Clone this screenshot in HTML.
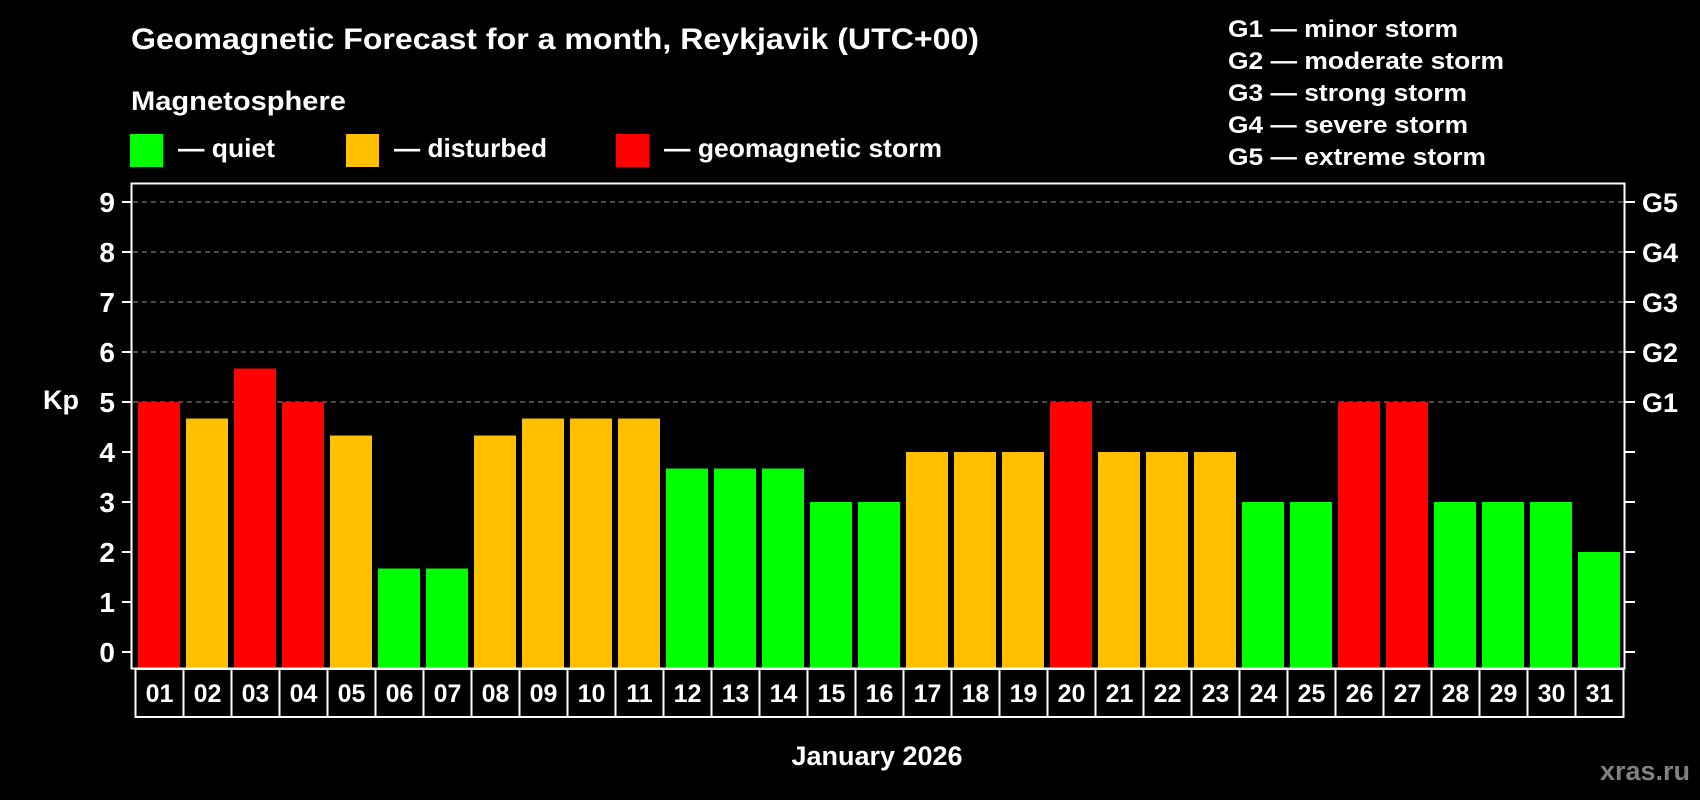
<!DOCTYPE html>
<html><head><meta charset="utf-8"><style>
html,body{margin:0;padding:0;background:#000;}
svg{display:block;font-family:"Liberation Sans",Arial,sans-serif;font-weight:bold;}
</style></head><body>
<svg width="1700" height="800" viewBox="0 0 1700 800" xmlns="http://www.w3.org/2000/svg">
<rect width="1700" height="800" fill="#000"/>
<g fill="#fff">
<text x="131" y="49" font-size="30" textLength="848" lengthAdjust="spacingAndGlyphs">Geomagnetic Forecast for a month, Reykjavik (UTC+00)</text>
<text x="131" y="110" font-size="27" textLength="215" lengthAdjust="spacingAndGlyphs">Magnetosphere</text>
<text x="178" y="157" font-size="26" textLength="97" lengthAdjust="spacingAndGlyphs">— quiet</text>
<text x="394" y="157" font-size="26" textLength="153" lengthAdjust="spacingAndGlyphs">— disturbed</text>
<text x="664" y="157" font-size="26" textLength="278" lengthAdjust="spacingAndGlyphs">— geomagnetic storm</text>
<g font-size="24">
<text x="1228" y="37" textLength="230" lengthAdjust="spacingAndGlyphs">G1 — minor storm</text>
<text x="1228" y="69" textLength="276" lengthAdjust="spacingAndGlyphs">G2 — moderate storm</text>
<text x="1228" y="101" textLength="239" lengthAdjust="spacingAndGlyphs">G3 — strong storm</text>
<text x="1228" y="133" textLength="240" lengthAdjust="spacingAndGlyphs">G4 — severe storm</text>
<text x="1228" y="165" textLength="258" lengthAdjust="spacingAndGlyphs">G5 — extreme storm</text>
</g>
</g>
<rect x="130" y="134" width="33" height="33" fill="#00ff00"/>
<rect x="346" y="134" width="33" height="33" fill="#ffc000"/>
<rect x="616" y="134" width="33" height="33" fill="#ff0000"/>
<g stroke="#999" stroke-width="1" stroke-dasharray="5,4">
<line x1="133" y1="202" x2="1623" y2="202"/>
<line x1="133" y1="252" x2="1623" y2="252"/>
<line x1="133" y1="302" x2="1623" y2="302"/>
<line x1="133" y1="352" x2="1623" y2="352"/>
<line x1="133" y1="402" x2="1623" y2="402"/>
</g>
<g>
<rect x="138" y="402" width="42" height="266" fill="#ff0000"/>
<rect x="186" y="418.5" width="42" height="249.5" fill="#ffc000"/>
<rect x="234" y="368.5" width="42" height="299.5" fill="#ff0000"/>
<rect x="282" y="402" width="42" height="266" fill="#ff0000"/>
<rect x="330" y="435.5" width="42" height="232.5" fill="#ffc000"/>
<rect x="378" y="568.5" width="42" height="99.5" fill="#00ff00"/>
<rect x="426" y="568.5" width="42" height="99.5" fill="#00ff00"/>
<rect x="474" y="435.5" width="42" height="232.5" fill="#ffc000"/>
<rect x="522" y="418.5" width="42" height="249.5" fill="#ffc000"/>
<rect x="570" y="418.5" width="42" height="249.5" fill="#ffc000"/>
<rect x="618" y="418.5" width="42" height="249.5" fill="#ffc000"/>
<rect x="666" y="468.5" width="42" height="199.5" fill="#00ff00"/>
<rect x="714" y="468.5" width="42" height="199.5" fill="#00ff00"/>
<rect x="762" y="468.5" width="42" height="199.5" fill="#00ff00"/>
<rect x="810" y="502" width="42" height="166" fill="#00ff00"/>
<rect x="858" y="502" width="42" height="166" fill="#00ff00"/>
<rect x="906" y="452" width="42" height="216" fill="#ffc000"/>
<rect x="954" y="452" width="42" height="216" fill="#ffc000"/>
<rect x="1002" y="452" width="42" height="216" fill="#ffc000"/>
<rect x="1050" y="402" width="42" height="266" fill="#ff0000"/>
<rect x="1098" y="452" width="42" height="216" fill="#ffc000"/>
<rect x="1146" y="452" width="42" height="216" fill="#ffc000"/>
<rect x="1194" y="452" width="42" height="216" fill="#ffc000"/>
<rect x="1242" y="502" width="42" height="166" fill="#00ff00"/>
<rect x="1290" y="502" width="42" height="166" fill="#00ff00"/>
<rect x="1338" y="402" width="42" height="266" fill="#ff0000"/>
<rect x="1386" y="402" width="42" height="266" fill="#ff0000"/>
<rect x="1434" y="502" width="42" height="166" fill="#00ff00"/>
<rect x="1482" y="502" width="42" height="166" fill="#00ff00"/>
<rect x="1530" y="502" width="42" height="166" fill="#00ff00"/>
<rect x="1578" y="552" width="42" height="116" fill="#00ff00"/>
</g>
<rect x="131.5" y="183.5" width="1493" height="485" fill="none" stroke="#fff" stroke-width="2"/>
<g stroke="#fff" stroke-width="2">
<line x1="122" y1="202" x2="131" y2="202"/><line x1="122" y1="252" x2="131" y2="252"/><line x1="122" y1="302" x2="131" y2="302"/><line x1="122" y1="352" x2="131" y2="352"/><line x1="122" y1="402" x2="131" y2="402"/><line x1="122" y1="452" x2="131" y2="452"/><line x1="122" y1="502" x2="131" y2="502"/><line x1="122" y1="552" x2="131" y2="552"/><line x1="122" y1="602" x2="131" y2="602"/><line x1="122" y1="652" x2="131" y2="652"/>
<line x1="1625" y1="202" x2="1635" y2="202"/><line x1="1625" y1="252" x2="1635" y2="252"/><line x1="1625" y1="302" x2="1635" y2="302"/><line x1="1625" y1="352" x2="1635" y2="352"/><line x1="1625" y1="402" x2="1635" y2="402"/><line x1="1625" y1="452" x2="1635" y2="452"/><line x1="1625" y1="502" x2="1635" y2="502"/><line x1="1625" y1="552" x2="1635" y2="552"/><line x1="1625" y1="602" x2="1635" y2="602"/><line x1="1625" y1="652" x2="1635" y2="652"/>
</g>
<g fill="#fff" font-size="28" text-anchor="end">
<text x="115" y="212">9</text><text x="115" y="262">8</text><text x="115" y="312">7</text><text x="115" y="362">6</text><text x="115" y="412">5</text><text x="115" y="462">4</text><text x="115" y="512">3</text><text x="115" y="562">2</text><text x="115" y="612">1</text><text x="115" y="662">0</text>
</g>
<g fill="#fff" font-size="27">
<text x="1642" y="212">G5</text><text x="1642" y="262">G4</text><text x="1642" y="312">G3</text><text x="1642" y="362">G2</text><text x="1642" y="412">G1</text>
<text x="43" y="409">Kp</text>
<text x="877" y="765" text-anchor="middle">January 2026</text>
</g>
<text x="1690" y="780" font-size="27" fill="#808080" text-anchor="end">xras.ru</text>
<g fill="none" stroke="#fff" stroke-width="2">
<rect x="135.5" y="669" width="1488" height="48"/>
<path d="M183.5 669v48M231.5 669v48M279.5 669v48M327.5 669v48M375.5 669v48M423.5 669v48M471.5 669v48M519.5 669v48M567.5 669v48M615.5 669v48M663.5 669v48M711.5 669v48M759.5 669v48M807.5 669v48M855.5 669v48M903.5 669v48M951.5 669v48M999.5 669v48M1047.5 669v48M1095.5 669v48M1143.5 669v48M1191.5 669v48M1239.5 669v48M1287.5 669v48M1335.5 669v48M1383.5 669v48M1431.5 669v48M1479.5 669v48M1527.5 669v48M1575.5 669v48"/>
</g>
<g fill="#fff" font-size="25" text-anchor="middle">
<text x="159.5" y="702">01</text><text x="207.5" y="702">02</text><text x="255.5" y="702">03</text><text x="303.5" y="702">04</text><text x="351.5" y="702">05</text><text x="399.5" y="702">06</text><text x="447.5" y="702">07</text><text x="495.5" y="702">08</text><text x="543.5" y="702">09</text><text x="591.5" y="702">10</text><text x="639.5" y="702">11</text><text x="687.5" y="702">12</text><text x="735.5" y="702">13</text><text x="783.5" y="702">14</text><text x="831.5" y="702">15</text><text x="879.5" y="702">16</text><text x="927.5" y="702">17</text><text x="975.5" y="702">18</text><text x="1023.5" y="702">19</text><text x="1071.5" y="702">20</text><text x="1119.5" y="702">21</text><text x="1167.5" y="702">22</text><text x="1215.5" y="702">23</text><text x="1263.5" y="702">24</text><text x="1311.5" y="702">25</text><text x="1359.5" y="702">26</text><text x="1407.5" y="702">27</text><text x="1455.5" y="702">28</text><text x="1503.5" y="702">29</text><text x="1551.5" y="702">30</text><text x="1599.5" y="702">31</text>
</g>
</svg>
</body></html>
